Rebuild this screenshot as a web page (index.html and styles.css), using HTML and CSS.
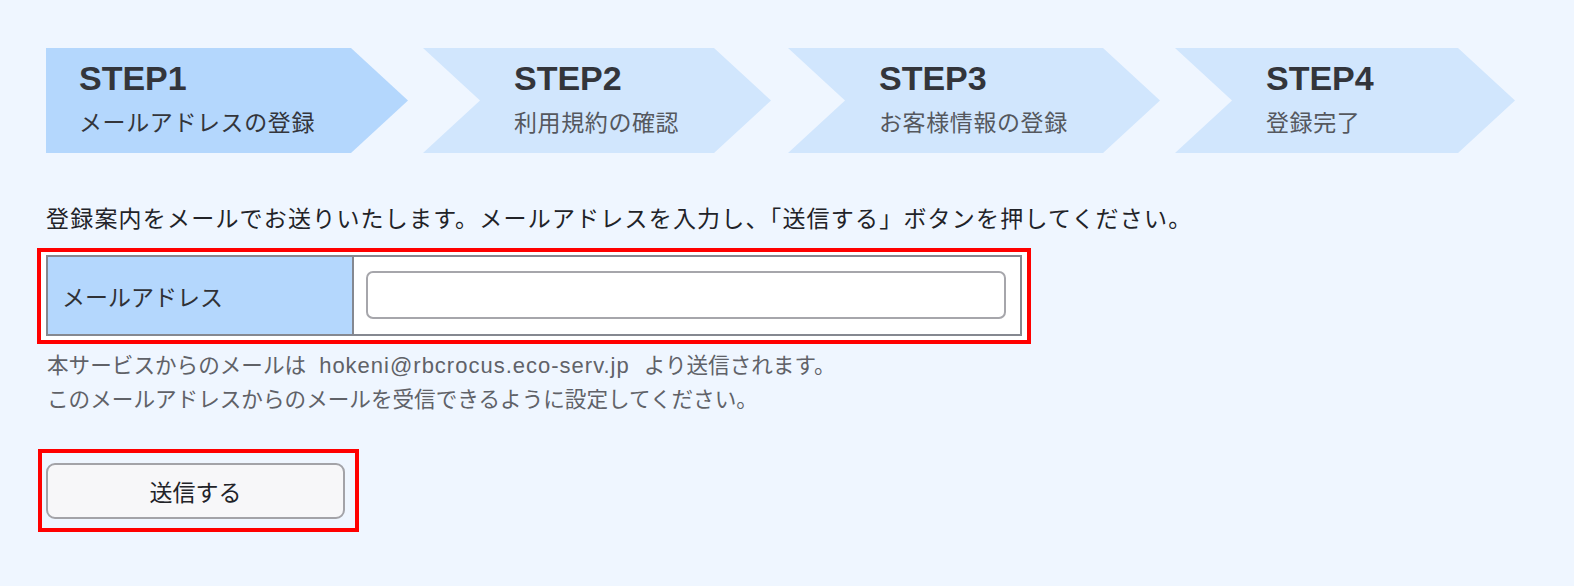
FILE: index.html
```html
<!DOCTYPE html>
<html lang="ja">
<head>
<meta charset="utf-8">
<title>メールアドレスの登録</title>
<link rel="stylesheet" href="styles.css">
</head>
<body>
<div class="page">
  <ol class="steps">
    <li class="step step--first step--active step--w1">
      <span class="step-title">STEP1</span>
      <span class="step-sub">メールアドレスの登録</span>
    </li>
    <li class="step step--w2">
      <span class="step-title">STEP2</span>
      <span class="step-sub">利用規約の確認</span>
    </li>
    <li class="step step--w3">
      <span class="step-title">STEP3</span>
      <span class="step-sub">お客様情報の登録</span>
    </li>
    <li class="step step--w4">
      <span class="step-title">STEP4</span>
      <span class="step-sub">登録完了</span>
    </li>
  </ol>

  <p class="lead">登録案内をメールでお送りいたします。メールアドレスを入力し、「送信する」ボタンを押してください。</p>

  <div class="mark mark--form">
    <div class="field">
      <label class="field-label" for="email">メールアドレス</label>
      <div class="field-input"><input id="email" type="email" class="input"></div>
    </div>
  </div>

  <p class="note">本サービスからのメールは<span class="mail">hokeni@rbcrocus.eco-serv.jp</span>より送信されます。<br>このメールアドレスからのメールを受信できるように設定してください。</p>

  <div class="mark mark--btn">
    <button type="button" class="submit">送信する</button>
  </div>
</div>
</body>
</html>
```

FILE: styles.css
```css
html, body {
  margin: 0;
  padding: 0;
  background: #eff6ff;
}
body {
  font-family: "Liberation Sans", "Noto Sans CJK JP", sans-serif;
  color: #2f3136;
}
.page {
  padding: 48px 0 0 46px;
  display: flex;
  flex-direction: column;
  align-items: flex-start;
}
.steps {
  list-style: none;
  margin: 0;
  padding: 0;
  display: flex;
  gap: 15px;
}
.step {
  height: 105px;
  box-sizing: border-box;
  background: #d1e6fd;
  padding: 13px 0 0 91px;
  display: flex;
  flex-direction: column;
  clip-path: polygon(0 0, calc(100% - 57px) 0, 100% 50%, calc(100% - 57px) 100%, 0 100%, 57px 50%);
}
.step--first {
  padding-left: 33px;
  clip-path: polygon(0 0, calc(100% - 57px) 0, 100% 50%, calc(100% - 57px) 100%, 0 100%);
}
.step--active {
  background: #b4d7fd;
}
.step--w1 { width: 362px; }
.step--w2 { width: 348px; }
.step--w3 { width: 372px; margin-left: 2px; }
.step--w4 { width: 340px; }
.step-title {
  font-family: "Liberation Sans", sans-serif;
  font-weight: 700;
  font-size: 34px;
  line-height: 34px;
  color: #33353b;
}
.step-sub {
  font-family: "Noto Sans CJK JP", sans-serif;
  font-size: 23px;
  line-height: 30px;
  margin-top: 11px;
  letter-spacing: 0.6px;
  color: #55585e;
}
.step--active .step-sub {
  color: #33353b;
}
.lead {
  font-family: "Noto Sans CJK JP", sans-serif;
  font-size: 23px;
  line-height: 34px;
  margin: 47px 0 0 0;
  color: #222328;
  letter-spacing: 1.2px;
}
.mark {
  border: 4px solid #ff0000;
  box-sizing: border-box;
}
.mark--form {
  margin: 14px 0 0 -9px;
  padding: 3px 5px 4px 5px;
  background: #ffffff;
}
.field {
  width: 976px;
  height: 81px;
  box-sizing: border-box;
  border: 2px solid #858890;
  display: flex;
  background: #fff;
}
.field-label {
  width: 306px;
  box-sizing: border-box;
  background: #b4d7fd;
  border-right: 2px solid #858890;
  padding-left: 14px;
  display: flex;
  align-items: center;
  font-family: "Noto Sans CJK JP", sans-serif;
  font-size: 23px;
  color: #2f3136;
}
.field-input {
  flex: 1;
  display: flex;
  align-items: center;
  padding: 0 14px 2px 12px;
}
.input {
  width: 100%;
  height: 48px;
  box-sizing: border-box;
  border: 2px solid #a6a6ab;
  border-radius: 7px;
  background: #fff;
  outline: none;
}
.note {
  margin: 4px 0 0 1px;
  font-family: "Noto Sans CJK JP", sans-serif;
  font-size: 21.6px;
  line-height: 32px;
  color: #606268;
}
.mail {
  font-family: "Liberation Sans", sans-serif;
  font-size: 22px;
  letter-spacing: 1px;
  padding: 0 14px 0 13px;
}
.mark--btn {
  margin: 35px 0 0 -8px;
  padding: 10px 10px 9px 4px;
}
.submit {
  width: 299px;
  height: 56px;
  box-sizing: border-box;
  border: 2px solid #a3a3a8;
  border-radius: 9px;
  background: #f7f7f9;
  font-family: "Noto Sans CJK JP", sans-serif;
  font-size: 23px;
  color: #222328;
  padding: 0;
  display: flex;
  align-items: center;
  justify-content: center;
}
```
